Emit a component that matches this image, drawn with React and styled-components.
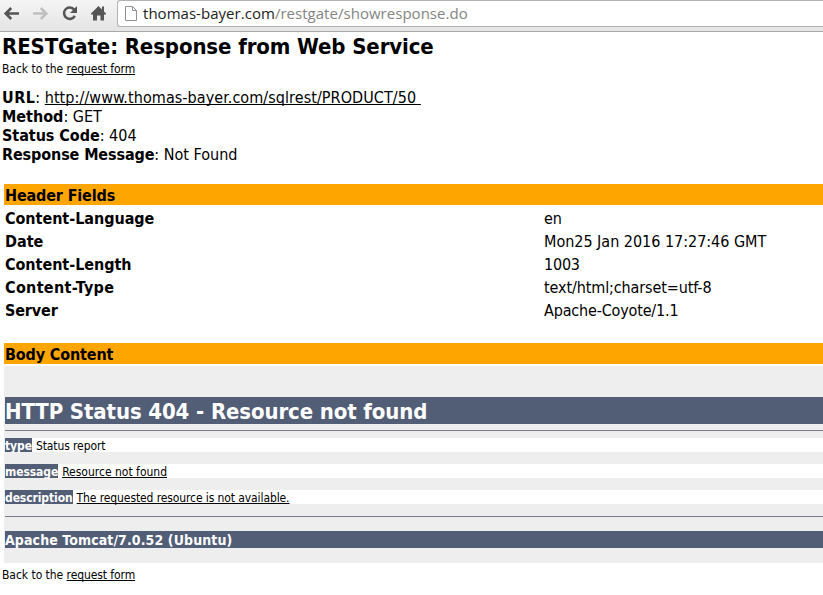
import React from 'react';
import styled, { createGlobalStyle } from 'styled-components';

const GlobalStyle = createGlobalStyle`
  * { box-sizing: border-box; }
  html, body { margin: 0; background: #fff; overflow: hidden; }
  body { font-family: "DejaVu Sans Condensed", "DejaVu Sans", sans-serif; font-stretch: condensed; color: #000; }
`;

const Toolbar = styled.header`
  height: 32px;
  display: flex;
  background: linear-gradient(#f5f5f5, #e4e4e4);
  border-bottom: 1px solid #a8a8a8;
`;

const NavButtons = styled.nav`
  width: 117px;
  flex: none;
`;

const AddressBar = styled.div`
  flex: 1;
  height: 27px;
  display: flex;
  align-items: center;
  padding-left: 7px;
  background: #fff;
  border: 1px solid #b2b2b2;
  border-right: 0;
  border-radius: 3px 0 0 3px;
  color: #848484;
  font: 15px/25px "Open Sans", sans-serif;
  letter-spacing: 0.03px;
  white-space: nowrap;

  svg { margin-right: 5px; flex: none; }
  b { font-weight: 400; color: #222; }
`;

const Content = styled.main`
  padding-left: 2px;
`;

const Title = styled.h1`
  margin: 0;
  height: 28px;
  font-size: 22px;
  line-height: 29px;
  letter-spacing: -0.11px;
  white-space: nowrap;
`;

const Small = styled.p`
  margin: 0;
  height: 18px;
  font-size: 12px;
  line-height: 18px;
  letter-spacing: -0.04px;
  white-space: pre;
`;

const Link = styled.a`
  color: inherit;
  text-decoration: underline;
  text-decoration-thickness: 1px;
  text-underline-offset: 1px;
  text-decoration-skip-ink: none;
  letter-spacing: ${(p) => (p.$tracking === undefined ? 'inherit' : `${p.$tracking}px`)};
  white-space: pre;
`;

const Summary = styled.section`
  padding: 10px 0 20px;
  font-size: 16px;
  line-height: 19px;
`;

const SummaryLine = styled.div`
  height: 19px;
  white-space: pre;

  b { letter-spacing: ${(p) => p.$labelTracking ?? -0.12}px; }
`;

const Panel = styled.section`
  margin-left: 2px;
`;

const Band = styled.h2`
  margin: 0 0 2px;
  height: 21px;
  padding-left: 1px;
  background: #ffa500;
  font-size: 16px;
  line-height: 23px;
  letter-spacing: -0.15px;
`;

const FieldGrid = styled.dl`
  margin: 0 0 21px;
  display: grid;
  grid-template-columns: 539px 1fr;
  grid-auto-rows: 23px;
  padding-left: 1px;
  font-size: 16px;
  line-height: 23px;
`;

const FieldName = styled.dt`
  font-weight: 700;
  letter-spacing: ${(p) => p.$tracking}px;
`;

const FieldValue = styled.dd`
  margin: 0;
  letter-spacing: ${(p) => p.$tracking}px;
`;

const Body = styled.div`
  height: 197px;
  padding: 31px 0 0 1px;
  background: #eee;
  display: flex;
  flex-direction: column;
`;

const StatusTitle = styled.h1`
  margin: 0 0 6px;
  height: 27px;
  background: #525d76;
  color: #fff;
  font-size: 22px;
  line-height: 30px;
  letter-spacing: -0.12px;
`;

const Rule = styled.hr`
  width: 100%;
  height: 1px;
  margin: ${(p) => p.$top || 0}px 0 0;
  border: 0;
  background: #777b84;
`;

const Report = styled.p`
  margin: ${(p) => p.$top || 12}px 0 0;
  height: 14px;
  background: #fff;
  font-size: 12px;
  line-height: 17px;
  letter-spacing: ${(p) => p.$tracking || 0}px;
  display: flex;
  gap: 4px;
`;

const ReportLabel = styled.b`
  height: 14px;
  background: #525d76;
  color: #fff;
  letter-spacing: -0.09px;
`;

const ServerName = styled.h3`
  margin: 14px 0 0;
  height: 17px;
  background: #525d76;
  color: #fff;
  font-size: 14px;
  line-height: 18px;
  letter-spacing: 0.1px;
`;

const Footer = styled.footer`
  padding-top: 3px;
`;

const fields = [
  { name: 'Content-Language', value: 'en', nameTracking: -0.04, valueTracking: 0 },
  { name: 'Date', value: 'Mon25 Jan 2016 17:27:46 GMT', nameTracking: 0, valueTracking: -0.02 },
  { name: 'Content-Length', value: '1003', nameTracking: -0.04, valueTracking: -0.2 },
  { name: 'Content-Type', value: 'text/html;charset=utf-8', nameTracking: 0.32, valueTracking: -0.11 },
  { name: 'Server', value: 'Apache-Coyote/1.1', nameTracking: -0.15, valueTracking: -0.17 },
];

function NavIcons() {
  return (
    <svg width="117" height="31" viewBox="0 0 117 31" fill="none" strokeWidth="2.6">
      <path d="M19 13.5H6M11.2 8L5.7 13.5L11.2 19" stroke="#555" />
      <path d="M33 13.5H46M40.8 8L46.3 13.5L40.8 19" stroke="#c0c0c0" />
      <path d="M74.2 9.6A5.7 5.7 0 1 0 74.8 15.8" stroke="#555" strokeWidth="2.5" />
      <path d="M77 6V13H70Z" fill="#555" />
      <path d="M98.5 6L91 13.6V14.5H93V20.5H97V15.5H100.5V20.5H104V14.5H106V13.6L104 11.5V6.5H102V9.5Z" fill="#555" />
    </svg>
  );
}

function PageIcon() {
  return (
    <svg width="13" height="16" viewBox="0 0 13 16" fill="none" stroke="#909090">
      <path d="M.5 .5H7.5L11.5 4.5V14.5H.5ZM7.5 .5V4.5H11.5" />
    </svg>
  );
}

function BackLink() {
  return (
    <Small>
      Back to the <Link $tracking={-0.09}>request form</Link>
    </Small>
  );
}

export default function App() {
  return (
    <>
      <GlobalStyle />
      <Toolbar>
        <NavButtons><NavIcons /></NavButtons>
        <AddressBar>
          <PageIcon />
          <b>thomas-bayer.com</b>/restgate/showresponse.do
        </AddressBar>
      </Toolbar>
      <Content>
        <Title>RESTGate: Response from Web Service</Title>
        <BackLink />
        <Summary>
          <SummaryLine $labelTracking={0.45}>
            <b>URL</b>: <Link $tracking={0.07}>{'http://www.thomas-bayer.com/sqlrest/PRODUCT/50 '}</Link>
          </SummaryLine>
          <SummaryLine $labelTracking={0}><b>Method</b>: GET</SummaryLine>
          <SummaryLine $labelTracking={-0.05}><b>Status Code</b>: 404</SummaryLine>
          <SummaryLine><b>Response Message</b>: Not Found</SummaryLine>
        </Summary>
        <Panel>
          <Band>Header Fields</Band>
          <FieldGrid>
            {fields.map((field) => (
              <React.Fragment key={field.name}>
                <FieldName $tracking={field.nameTracking}>{field.name}</FieldName>
                <FieldValue $tracking={field.valueTracking}>{field.value}</FieldValue>
              </React.Fragment>
            ))}
          </FieldGrid>
          <Band>Body Content</Band>
          <Body>
            <StatusTitle>HTTP Status 404 - Resource not found</StatusTitle>
            <Rule />
            <Report $top={7} $tracking={-0.1}><ReportLabel>type</ReportLabel><span>Status report</span></Report>
            <Report><ReportLabel>message</ReportLabel><Link>Resource not found</Link></Report>
            <Report $tracking={-0.1}><ReportLabel>description</ReportLabel><Link>The requested resource is not available.</Link></Report>
            <Rule $top={12} />
            <ServerName>Apache Tomcat/7.0.52 (Ubuntu)</ServerName>
          </Body>
        </Panel>
        <Footer><BackLink /></Footer>
      </Content>
    </>
  );
}
